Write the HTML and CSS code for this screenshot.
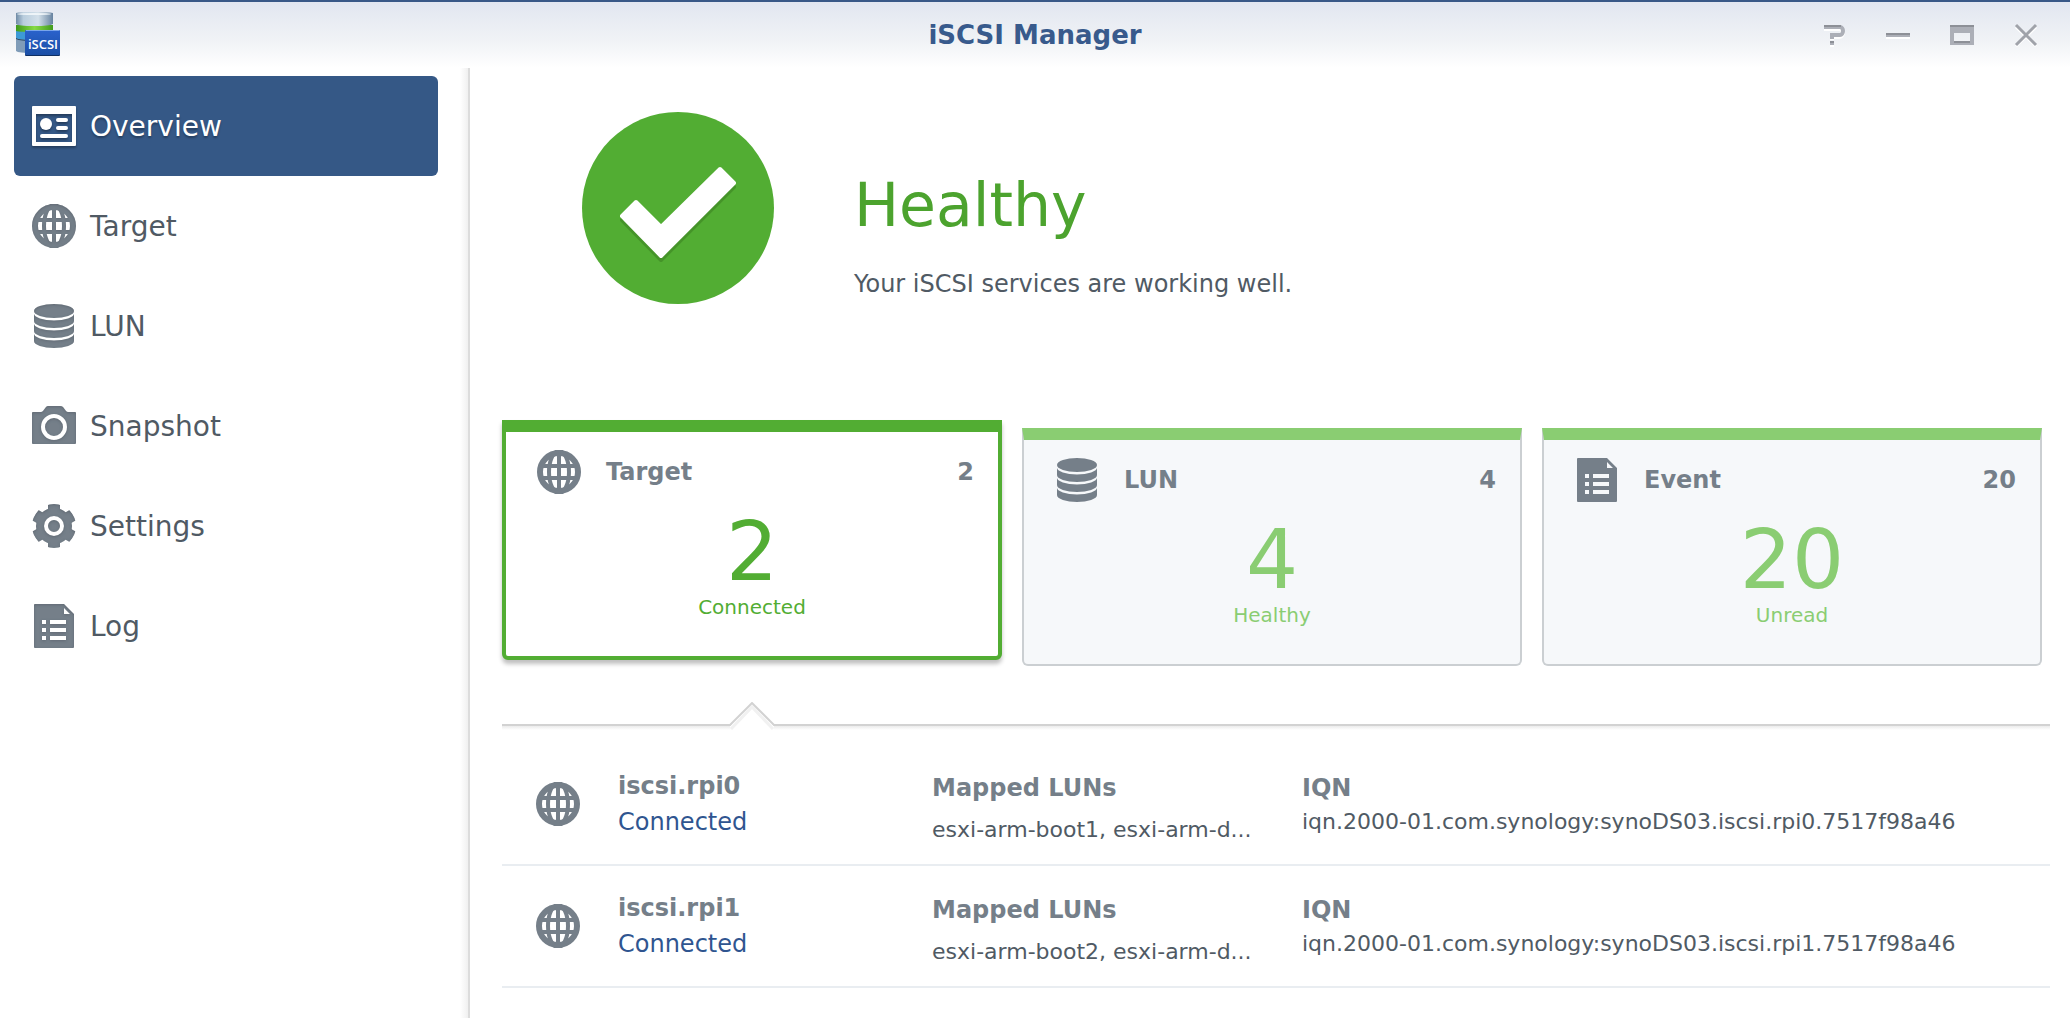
FILE: index.html
```html
<!DOCTYPE html>
<html lang="en">
<head>
<meta charset="utf-8">
<title>iSCSI Manager</title>
<meta name="viewport" content="width=device-width, initial-scale=1">
<link rel="stylesheet" href="styles.css">
</head>
<body>
<svg class="sprite" aria-hidden="true">
  <defs>
    <filter id="inset" x="-5%" y="-5%" width="110%" height="110%">
      <feOffset in="SourceAlpha" dy="1" result="shifted"/>
      <feGaussianBlur in="shifted" stdDeviation="1.5" result="soft"/>
      <feComposite in="SourceAlpha" in2="soft" operator="out" result="edge"/>
      <feFlood flood-color="#2c333b" flood-opacity="0.4"/>
      <feComposite in2="edge" operator="in" result="shade"/>
      <feMerge><feMergeNode in="SourceGraphic"/><feMergeNode in="shade"/></feMerge>
    </filter>
    <mask id="gear-ring">
      <rect width="44" height="44" fill="#fff"/>
      <circle cx="22" cy="22" r="8" fill="none" stroke="#000" stroke-width="4"/>
    </mask>
    <clipPath id="gear-clip"><circle cx="22" cy="22" r="22"/></clipPath>
  </defs>
  <symbol id="overview" viewBox="0 0 44 44">
    <path fill="currentColor" fill-rule="evenodd" d="M1 2h42a1 1 0 0 1 1 1v38a1 1 0 0 1-1 1H1a1 1 0 0 1-1-1V3a1 1 0 0 1 1-1zM4 10v28h36V10z"/>
    <circle cx="14" cy="20" r="6" fill="currentColor"/>
    <path stroke="currentColor" stroke-width="4" stroke-linecap="round" d="M26 16h8M26 24h8M10 32h24"/>
  </symbol>
  <symbol id="globe" viewBox="0 0 44 44">
    <g fill="none" stroke="currentColor">
      <circle cx="22" cy="22" r="19" stroke-width="6"/>
      <path stroke-width="4" d="M22 3v38M3 16h38M3 28h38"/>
      <ellipse cx="22" cy="22" rx="10" ry="21" stroke-width="4"/>
    </g>
  </symbol>
  <symbol id="lun" viewBox="0 0 44 44">
    <ellipse cx="22" cy="7" rx="20" ry="7" fill="currentColor"/>
    <path fill="currentColor" d="M2 9.500A20 7 0 0 0 42 9.500V17A20 7 0 0 1 2 17zM2 19.500A20 7 0 0 0 42 19.500V27A20 7 0 0 1 2 27zM2 29.500A20 7 0 0 0 42 29.500V37A20 7 0 0 1 2 37z"/>
  </symbol>
  <symbol id="camera" viewBox="0 0 44 44">
    <path fill="currentColor" fill-rule="evenodd" d="M1 8h8q1 0 2-1l3-4q1-1 2-1h12q2 0 3 1l3 4q1 1 2 1h7a1 1 0 0 1 1 1v30a1 1 0 0 1-1 1H1a1 1 0 0 1-1-1V9a1 1 0 0 1 1-1zM22 10a13 13 0 1 0 0 26a13 13 0 1 0 0-26zM22 14a9 9 0 1 1 0 18a9 9 0 1 1 0-18z"/>
  </symbol>
  <symbol id="gear" viewBox="0 0 44 44">
    <g mask="url(#gear-ring)"><g clip-path="url(#gear-clip)" fill="currentColor">
      <circle cx="22" cy="22" r="18"/>
      <rect x="16" y="0" width="12" height="44"/>
      <rect x="16" y="0" width="12" height="44" transform="rotate(60 22 22)"/>
      <rect x="16" y="0" width="12" height="44" transform="rotate(120 22 22)"/>
    </g></g>
  </symbol>
  <symbol id="log" viewBox="0 0 44 44">
    <path fill="currentColor" fill-rule="evenodd" d="M3 0h29l10 10v33a1 1 0 0 1-1 1H3a1 1 0 0 1-1-1V1a1 1 0 0 1 1-1zM32 4v6h6zM10 16h4v4h-4zM18 16h16v4H18zM10 24h4v4h-4zM18 24h16v4H18zM10 32h4v4h-4zM18 32h16v4H18z"/>
  </symbol>
</svg>

<div class="window">
  <header class="titlebar">
    <svg class="app-icon" viewBox="0 0 48 48" aria-hidden="true">
      <defs>
        <linearGradient id="steel"><stop offset="0" stop-color="#6f8ba6"/><stop offset=".2" stop-color="#b9cddd"/><stop offset=".6" stop-color="#d3e0ea"/><stop offset="1" stop-color="#6783a0"/></linearGradient>
        <linearGradient id="lime"><stop offset="0" stop-color="#3f9a1c"/><stop offset=".5" stop-color="#86da45"/><stop offset="1" stop-color="#429c1d"/></linearGradient>
        <linearGradient id="badge" x2="0" y2="1"><stop offset="0" stop-color="#2a62cc"/><stop offset="1" stop-color="#1b4fa6"/></linearGradient>
      </defs>
      <path fill="#7f9cb8" d="M2 27h36v13q-2 2-18 2T2 40z"/>
      <path fill="#3d9ad6" d="M2 20h36v7q-3 2-18 2T2 27z"/>
      <path fill="#2b4660" d="M2 27q3 2 18 2v1Q6 30 2 28z"/>
      <path fill="url(#lime)" d="M2 14h37v6q-3 1-18 1T2 20z"/>
      <path fill="url(#steel)" d="M2 2q3-1 18-1t19 1v11q-3 2-19 2T2 13z"/>
      <ellipse cx="20" cy="3" rx="17" ry="1" fill="#eef4f8"/>
      <rect x="11" y="20" width="35" height="25" rx="1" fill="#0f2f63"/>
      <rect x="11" y="19" width="35" height="25" rx="1" fill="url(#badge)"/>
      <path stroke="#79a5ea" d="M12 19.500h33"/>
      <text class="badge-text" x="29" y="38" text-anchor="middle">iSCSI</text>
    </svg>
    <h1 class="title">iSCSI Manager</h1>
    <div class="controls">
      <button type="button" aria-label="Help"><svg viewBox="0 0 24 24"><path fill="none" stroke="#fff" stroke-width="4" d="M2 6h15a3 3 0 0 1 0 8H10v3M8 23h4"/><path fill="none" stroke="#acafb7" stroke-width="4" d="M2 4h16a3 4 0 0 1 0 8H10v4M8 20h4"/><path stroke="#8d9097" stroke-width="2" d="M2 3h17M8 19h4"/></svg></button>
      <button type="button" aria-label="Minimize"><svg viewBox="0 0 24 24"><path fill="#fff" d="M0 14h24v2H0z"/><path fill="#acafb7" d="M0 10h24v4H0z"/><path fill="#8d9097" d="M0 10h24v2H0z"/></svg></button>
      <button type="button" aria-label="Maximize"><svg viewBox="0 0 24 24"><path fill="#acafb7" fill-rule="evenodd" d="M0 2h24v20H0zM4 10v8h16v-8z"/><path fill="#8d9097" d="M0 2h24v2H0zM4 18h16v2H4z"/></svg></button>
      <button type="button" aria-label="Close"><svg viewBox="0 0 24 24"><path stroke="#fff" stroke-width="3" d="M2 4l20 19M22 4L2 23"/><path stroke="#a0a3aa" stroke-width="3" d="M2 2l20 20M22 2L2 22"/></svg></button>
    </div>
  </header>

  <div class="body">
    <nav class="sidebar" aria-label="Sections">
      <a class="nav-item active" href="#overview" aria-current="page"><svg class="icon"><use href="#overview"/></svg>Overview</a>
      <a class="nav-item" href="#target"><svg class="icon"><use href="#globe"/></svg>Target</a>
      <a class="nav-item" href="#luns"><svg class="icon"><use href="#lun"/></svg>LUN</a>
      <a class="nav-item" href="#snapshot"><svg class="icon"><use href="#camera"/></svg>Snapshot</a>
      <a class="nav-item" href="#settings"><svg class="icon"><use href="#gear"/></svg>Settings</a>
      <a class="nav-item" href="#logs"><svg class="icon"><use href="#log"/></svg>Log</a>
    </nav>

    <main class="main">
      <section class="status">
        <svg class="status-icon" viewBox="0 0 192 192" aria-hidden="true">
          <circle cx="96" cy="96" r="96" fill="#52ad33"/>
          <path fill="#459429" stroke="#459429" stroke-width="4" stroke-linejoin="round" d="M40 108L54 94L79 119L138 61L152 75L79 148z"/>
          <path fill="#fff" stroke="#fff" stroke-width="4" stroke-linejoin="round" d="M40 104L54 90L79 115L138 57L152 71L79 144z"/>
        </svg>
        <div class="status-text">
          <h2>Healthy</h2>
          <p>Your iSCSI services are working well.</p>
        </div>
      </section>

      <div class="cards">
        <button type="button" class="card selected" aria-pressed="true">
          <span class="card-head"><svg class="icon"><use href="#globe"/></svg><span class="card-name">Target</span><span>2</span></span>
          <span class="card-value">2</span>
          <span class="card-label">Connected</span>
        </button>
        <button type="button" class="card" aria-pressed="false">
          <span class="card-head"><svg class="icon"><use href="#lun"/></svg><span class="card-name">LUN</span><span>4</span></span>
          <span class="card-value">4</span>
          <span class="card-label">Healthy</span>
        </button>
        <button type="button" class="card" aria-pressed="false">
          <span class="card-head"><svg class="icon"><use href="#log"/></svg><span class="card-name">Event</span><span>20</span></span>
          <span class="card-value">20</span>
          <span class="card-label">Unread</span>
        </button>
      </div>

      <div class="divider">
        <svg class="notch" viewBox="0 0 48 30" aria-hidden="true"><path fill="#fff" d="M2 30V24L24 2L46 24V30z"/><path fill="none" stroke="#f1f1f1" stroke-width="3" d="M3 27L24 5L45 27"/><path fill="none" stroke="#d2d2d2" stroke-width="2" d="M0 23H2L24 1L46 23H48"/></svg>
      </div>

      <ul class="targets">
        <li class="target">
          <svg class="icon"><use href="#globe"/></svg>
          <div class="identity"><strong>iscsi.rpi0</strong><span class="state">Connected</span></div>
          <div class="detail mapped"><strong>Mapped LUNs</strong><span>esxi-arm-boot1, esxi-arm-d...</span></div>
          <div class="detail"><strong>IQN</strong><span>iqn.2000-01.com.synology:synoDS03.iscsi.rpi0.7517f98a46</span></div>
        </li>
        <li class="target">
          <svg class="icon"><use href="#globe"/></svg>
          <div class="identity"><strong>iscsi.rpi1</strong><span class="state">Connected</span></div>
          <div class="detail mapped"><strong>Mapped LUNs</strong><span>esxi-arm-boot2, esxi-arm-d...</span></div>
          <div class="detail"><strong>IQN</strong><span>iqn.2000-01.com.synology:synoDS03.iscsi.rpi1.7517f98a46</span></div>
        </li>
      </ul>
    </main>
  </div>
</div>
</body>
</html>
```
FILE: styles.css
```css
* {
  box-sizing: border-box;
}

body {
  margin: 0;
  background: #fff;
  color: #505a64;
  font-family: Verdana, "DejaVu Sans", sans-serif;
  font-size: 24px;
}

h1, h2, p, ul {
  margin: 0;
  padding: 0;
}

button {
  margin: 0;
  padding: 0;
  border: 0;
  background: none;
  font: inherit;
  cursor: pointer;
}

.sprite {
  position: absolute;
  width: 0;
  height: 0;
}

.icon {
  display: block;
  flex: none;
  width: 44px;
  height: 44px;
  color: #757f89;
}

.window {
  display: flex;
  flex-direction: column;
  min-height: 100vh;
  border-top: 2px solid #385887;
}

/* Title bar */
.titlebar {
  display: grid;
  grid-template-columns: 1fr auto 1fr;
  align-items: center;
  height: 66px;
  padding: 0 14px;
  background: linear-gradient(#e1e6f0, #f1f3f6 60%, #fff);
}

.app-icon {
  width: 48px;
  height: 48px;
}

.badge-text {
  fill: #fff;
  font: 600 13px "Open Sans", sans-serif;
}

.title {
  color: #385a8c;
  font-size: 26px;
}

.controls {
  display: flex;
  justify-content: flex-end;
  gap: 40px;
  padding-right: 18px;
}

.controls button,
.controls svg {
  display: block;
  width: 24px;
  height: 24px;
}

.body {
  display: flex;
  flex: 1;
}

/* Sidebar */
.sidebar {
  flex: none;
  width: 470px;
  padding: 8px 30px 8px 14px;
  border-right: 2px solid #dcdcdc;
  background: linear-gradient(to left, #f0f0f0, #fff 8px);
}

.nav-item {
  display: flex;
  align-items: center;
  gap: 14px;
  height: 100px;
  padding: 0 18px;
  border-radius: 6px;
  color: #505a64;
  font-size: 28px;
  text-decoration: none;
}

.nav-item .icon {
  filter: url(#inset);
}

.nav-item.active {
  background: #355886;
  color: #fff;
  text-shadow: 0 2px 2px rgba(0, 0, 0, 0.3);
}

.nav-item.active .icon {
  color: #fff;
  filter: drop-shadow(0 2px 1px rgba(0, 0, 0, 0.3));
}

/* Overview */
.main {
  flex: 1;
  min-width: 0;
  padding: 44px 20px 20px 32px;
}

.status {
  display: flex;
  gap: 80px;
  margin-bottom: 116px;
  padding-left: 80px;
}

.status-icon {
  flex: none;
  width: 192px;
  height: 192px;
}

.status-text {
  padding-top: 57px;
}

.status-text h2 {
  margin-bottom: 27px;
  color: #4ca32e;
  font-size: 60px;
  font-weight: normal;
  line-height: 72px;
}

.status-text p {
  line-height: 32px;
}

.cards {
  display: grid;
  grid-template-columns: repeat(3, 1fr);
  align-items: end;
  gap: 20px;
  padding-right: 8px;
}

.card {
  display: flex;
  flex-direction: column;
  padding: 18px 0 34px;
  border: 2px solid #cbcfd2;
  border-top: 12px solid #8acd72;
  border-radius: 0 0 6px 6px;
  background: #f6f8fa;
  color: #8acd72;
}

.card.selected {
  margin-bottom: 6px;
  border: 4px solid #52ad33;
  border-top-width: 12px;
  background: #fff;
  color: #52ad33;
  box-shadow: 0 4px 4px rgba(0, 0, 0, 0.25);
}

.card-head {
  display: flex;
  align-items: center;
  margin-bottom: 18px;
  padding: 0 24px 0 31px;
  color: #757f89;
  font-weight: bold;
}

.card-name {
  flex: 1;
  padding-left: 25px;
  text-align: left;
}

.card-value {
  font-size: 82px;
  line-height: 80px;
}

.card-label {
  font-size: 20px;
  line-height: 30px;
}

/* Divider whose notch points at the selected card */
.divider {
  display: grid;
  grid-template-columns: repeat(3, 1fr);
  gap: 20px;
  height: 24px;
  margin-top: 36px;
  padding-right: 8px;
  border-bottom: 2px solid #d2d2d2;
}

.notch {
  position: relative;
  justify-self: center;
  width: 48px;
  height: 30px;
}

/* Target list */
.targets {
  padding-top: 18px;
  background: linear-gradient(#ebebeb, #fff 4px);
  list-style: none;
}

.target {
  display: grid;
  grid-template-columns: 82px 314fr 370fr 748fr;
  align-items: center;
  min-height: 122px;
  padding-left: 34px;
  border-bottom: 2px solid #e9edf1;
}

.target strong {
  color: #757f89;
}

.identity,
.detail {
  display: flex;
  flex-direction: column;
  min-width: 0;
  line-height: 36px;
}

.state {
  color: #2f5590;
}

.detail {
  align-self: start;
  padding-top: 27px;
  line-height: 34px;
}

.detail span {
  font-size: 22px;
}

.mapped {
  gap: 8px;
}
```
